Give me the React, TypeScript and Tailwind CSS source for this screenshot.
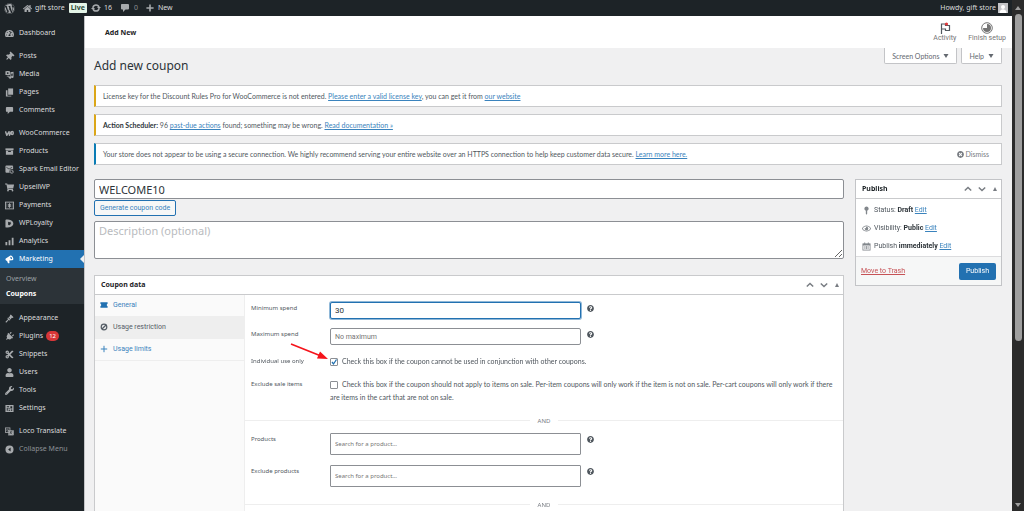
import React from "react";
import {
  FaWordpress,
  FaTachometerAlt,
  FaThumbtack,
  FaShoppingCart,
  FaUser,
  FaWrench,
  FaPlug,
  FaCut,
  FaHome,
  FaQuestionCircle,
  FaTimesCircle,
  FaRegEye,
} from "react-icons/fa";

type IconProps = { className?: string };
type IconType = (props: IconProps) => React.ReactNode;

const MediaIcon = ({ className }: IconProps) => (
  <svg viewBox="0 0 20 20" fill="currentColor" className={className}>
    <path d="M1 3h2l1-1h4l1 1h2v8H1z" />
    <circle cx="6" cy="6.800" r="2" fill="#1d2327" />
    <path d="M12 5l7-1v11.500a2.500 2.500 0 1 1-2-2.400V8l-3 .5V17a2.500 2.500 0 1 1-2-2.400z" />
    <path d="M4 12.500h6V18H8v-3.500H4z" />
  </svg>
);

const PagesIcon = ({ className }: IconProps) => (
  <svg viewBox="0 0 20 20" fill="currentColor" className={className}>
    <path d="M7 1h11v14H7z" />
    <path d="M2 5h3.500v12H14v2H2z" />
  </svg>
);

const CommentIcon = ({ className }: IconProps) => (
  <svg viewBox="0 0 20 20" fill="currentColor" className={className}>
    <path d="M4 2h12a2 2 0 0 1 2 2v7a2 2 0 0 1-2 2h-5l-5 5v-5H4a2 2 0 0 1-2-2V4c0-1.100.9-2 2-2z" />
  </svg>
);

const WooIcon = ({ className }: IconProps) => (
  <svg viewBox="0 0 20 20" fill="none" stroke="currentColor" strokeWidth="3.200" strokeLinejoin="round" className={className}>
    <path d="M1 5l3 9 5-8 1 8 4-8" />
    <ellipse cx="16" cy="9" rx="2.400" ry="3.400" />
  </svg>
);

const BoxIcon = ({ className }: IconProps) => (
  <svg viewBox="0 0 20 20" fill="currentColor" className={className}>
    <path d="M1 3h18v4H1z" />
    <path d="M2 8h16v9H2zM7 9v2h6V9z" fillRule="evenodd" />
  </svg>
);

const SparkIcon = ({ className }: IconProps) => (
  <svg viewBox="0 0 20 20" fill="currentColor" className={className}>
    <path d="M3 1h13a2 2 0 0 1 2 2v6.500a5.500 5.500 0 0 0-7.500 7.500H3a2 2 0 0 1-2-2V3c0-1.100.9-2 2-2z" />
    <path d="M3 5l6 4 7-4" fill="none" stroke="#1d2327" strokeWidth="1.500" />
    <circle cx="15" cy="15" r="3.600" fill="none" stroke="currentColor" strokeWidth="1.600" />
    <path d="M13 15l1.500 1.500 3-3" fill="none" stroke="currentColor" strokeWidth="1.400" />
  </svg>
);

const PaymentsIcon = ({ className }: IconProps) => (
  <svg viewBox="0 0 20 20" fill="none" stroke="currentColor" className={className}>
    <rect x="1" y="2.500" width="18" height="15" strokeWidth="2" />
    <path d="M13 7.500H8.500a1.200 1.200 0 0 0 0 2.500h3a1.200 1.200 0 0 1 0 2.500H7M10 5v10" strokeWidth="2.200" />
    <path d="M4 5v10M16 5v10" strokeWidth="1" />
  </svg>
);

const LoyaltyIcon = ({ className }: IconProps) => (
  <svg viewBox="0 0 20 20" fill="currentColor" className={className}>
    <path
      fillRule="evenodd"
      d="M1 3c0-1.500 1-2 2.500-2 8 0 15 3 15 9s-7 9-15 9C2 19 1 18.500 1 17zM7 6v8l2-1.500 2 2V12l3-1-2-2 1-3-3 1z"
    />
  </svg>
);

const AnalyticsIcon = ({ className }: IconProps) => (
  <svg viewBox="0 0 20 20" fill="currentColor" className={className}>
    <path d="M1 11h4v7.500H1zM8 7h4v11.500H8zM15 1.500h4v17h-4z" />
  </svg>
);

const MarketingIcon = ({ className }: IconProps) => (
  <svg viewBox="0 0 20 20" fill="currentColor" className={className}>
    <path
      fillRule="evenodd"
      d="M12 1c4 0 7 4.500 6.500 8.500-.3 2-2 2.800-3.500 2L9.500 12l.5 5c0 1.200-2.600 2-3.600 1L4.500 13C2 13 1 11 1 9.500S2 7 3.500 6.500zM12.500 4c-1.500 1-.5 4.500 2 5.500 2 0 1.500-5-2-5.500z"
    />
  </svg>
);

const BrushIcon = ({ className }: IconProps) => (
  <svg viewBox="0 0 20 20" fill="currentColor" className={className}>
    <path d="M11 3l2-2 6 6-2 2-2-.5-2.500 3.500-5-5L11 5zM6.500 8l5.500 5.500-2 1-2-1-4.500 5.300c-1 1-3-1-2-2L6.500 12l-1-2z" />
  </svg>
);

const SettingsIcon = ({ className }: IconProps) => (
  <svg viewBox="0 0 20 20" fill="currentColor" className={className}>
    <path
      fillRule="evenodd"
      d="M1 2h18v16H1zM4 5v2h5V5zM4 9v6h2V9zM8 9v2h2V9zM12 5v5h4V5zM8 13v2h3v-2zM13 12v3h3v-3z"
    />
  </svg>
);

const TranslateIcon = ({ className }: IconProps) => (
  <svg viewBox="0 0 20 20" fill="none" stroke="currentColor" className={className}>
    <rect x="1" y="2" width="10" height="10" strokeWidth="1.800" />
    <path d="M8 5H4v4h4V7H6.500" strokeWidth="1.200" />
    <rect x="8" y="8" width="11" height="10" fill="currentColor" strokeWidth="1" />
    <path d="M10.500 11h6M13.500 9.500V11l-3 5M12 12.500l4 3.500" stroke="#1d2327" strokeWidth="1.200" />
  </svg>
);

const CollapseIcon = ({ className }: IconProps) => (
  <svg viewBox="0 0 20 20" fill="currentColor" className={className}>
    <path fillRule="evenodd" d="M10 1a9 9 0 1 1 0 18 9 9 0 0 1 0-18zM12.500 5.500L7 10l5.500 4.500z" />
  </svg>
);

const UpdateIcon = ({ className }: IconProps) => (
  <svg viewBox="0 0 20 20" fill="none" stroke="currentColor" strokeWidth="3" className={className}>
    <path d="M4 8.500a6.200 6.200 0 0 1 12 0M16 11.500a6.200 6.200 0 0 1-12 0" />
    <path d="M12 8h8l-4 4.500zM0 12h8L4 7.500z" fill="currentColor" stroke="none" />
  </svg>
);

const PlusIcon = ({ className }: IconProps) => (
  <svg viewBox="0 0 20 20" fill="none" stroke="currentColor" strokeWidth="4" className={className}>
    <path d="M10 1v18M1 10h18" />
  </svg>
);

const ThinPlusIcon = ({ className }: IconProps) => (
  <svg viewBox="0 0 20 20" fill="none" stroke="currentColor" strokeWidth="2.500" className={className}>
    <path d="M10 2v16M2 10h16" />
  </svg>
);

const BlockedIcon = ({ className }: IconProps) => (
  <svg viewBox="0 0 20 20" fill="none" stroke="currentColor" strokeWidth="3" className={className}>
    <circle cx="10" cy="10" r="7" />
    <path d="M5 15L15 5" />
  </svg>
);

const TicketIcon = ({ className }: IconProps) => (
  <svg viewBox="0 0 20 20" fill="#2271b1" className={className}>
    <path d="M1 3h18v4a3.200 3.200 0 0 0 0 6v4H1v-4a3.200 3.200 0 0 0 0-6z" />
  </svg>
);

const PinIcon = ({ className }: IconProps) => (
  <svg viewBox="0 0 20 20" fill="currentColor" className={className}>
    <path d="M10 1a5 5 0 0 1 1.500 9.700V17L10 19.500 8.500 17v-6.300A5 5 0 0 1 10 1z" />
  </svg>
);

const CalendarIcon = ({ className }: IconProps) => (
  <svg viewBox="0 0 20 20" fill="none" stroke="currentColor" className={className}>
    <rect x="2" y="4" width="16" height="14" strokeWidth="1.800" />
    <path d="M2 6h16" strokeWidth="3.500" />
    <path d="M6 1v4M14 1v4" strokeWidth="2" />
    <path d="M6.500 9v7M10 9v7M13.500 9v7" strokeWidth="1.800" />
  </svg>
);

const ChevronIcon = ({ down }: { down?: boolean }) => (
  <svg viewBox="0 0 10 10" fill="none" stroke="#787c82" strokeWidth="1.800" className="size-2">
    <path d={down ? "M1 3l4 4 4-4" : "M1 7l4-4 4 4"} />
  </svg>
);

type MenuEntry = { label: string; icon: IconType; badge?: string; active?: boolean; muted?: boolean };

const menuGroups: MenuEntry[][] = [
  [{ label: "Dashboard", icon: FaTachometerAlt }],
  [
    { label: "Posts", icon: FaThumbtack },
    { label: "Media", icon: MediaIcon },
    { label: "Pages", icon: PagesIcon },
    { label: "Comments", icon: CommentIcon },
  ],
  [
    { label: "WooCommerce", icon: WooIcon },
    { label: "Products", icon: BoxIcon },
    { label: "Spark Email Editor", icon: SparkIcon },
    { label: "UpsellWP", icon: FaShoppingCart },
    { label: "Payments", icon: PaymentsIcon },
    { label: "WPLoyalty", icon: LoyaltyIcon },
    { label: "Analytics", icon: AnalyticsIcon },
    { label: "Marketing", icon: MarketingIcon, active: true },
  ],
  [
    { label: "Appearance", icon: BrushIcon },
    { label: "Plugins", icon: FaPlug, badge: "12" },
    { label: "Snippets", icon: FaCut },
    { label: "Users", icon: FaUser },
    { label: "Tools", icon: FaWrench },
    { label: "Settings", icon: SettingsIcon },
  ],
  [
    { label: "Loco Translate", icon: TranslateIcon },
    { label: "Collapse Menu", icon: CollapseIcon, muted: true },
  ],
];

// these two lean to the right
const tilted = ["Posts", "Plugins"];

const MenuItem = ({ label, icon: Icon, badge, active, muted }: MenuEntry) => (
  <li>
    <a
      href="#"
      className={`relative flex h-[18px] items-center gap-[5px] pl-[5px] ${
        active ? "bg-[#2271b1] text-white" : muted ? "text-[#8d9196]" : "text-[#dcdcde]"
      }`}
    >
      <Icon
        className={`size-[9px] shrink-0 ${active ? "text-white" : "text-[#a7aaad]"} ${
          tilted.includes(label) ? "rotate-45" : ""
        }`}
      />
      <span>{label}</span>
      {badge && (
        <span className="-ml-[2px] flex h-[10px] items-center rounded-full bg-[#d63638] px-[3px] text-[6px] text-white">
          {badge}
        </span>
      )}
      {active && (
        <svg viewBox="0 0 4 8" className="absolute right-0 h-2 w-1">
          <path d="M4 0v8L0 4z" fill="#f0f0f1" />
        </svg>
      )}
    </a>
    {active && (
      <ul className="flex h-9 flex-col bg-[#2c3338] px-[6px] py-[3px] leading-[15px]">
        <li>
          <a href="#" className="text-[#9ca1a6]">Overview</a>
        </li>
        <li>
          <a href="#" className="font-bold text-white">Coupons</a>
        </li>
      </ul>
    )}
  </li>
);

const Sidebar = () => (
  <nav className="w-[84px] shrink-0 bg-[#1d2327] pt-2">
    {menuGroups.map((group) => (
      <ul key={group[0].label} className="mb-[5px]">
        {group.map((entry) => (
          <MenuItem key={entry.label} {...entry} />
        ))}
      </ul>
    ))}
  </nav>
);

const AdminBar = () => (
  <header className="flex h-4 items-center justify-between bg-[#1d2327] pr-1 pl-1 text-[#dcdcde]">
    <div className="flex items-center">
      <FaWordpress className="mr-2 size-[11px] text-[#a7aaad]" />
      <FaHome className="mr-[3px] size-[9px] text-[#a7aaad]" />
      <span>gift store</span>
      <span className="mx-1 rounded-[1px] bg-[#e4f5e8] px-[2px] leading-[10px] font-bold text-[#2f4a39]">Live</span>
      <UpdateIcon className="mr-[3px] size-[10px] text-[#a7aaad]" />
      <span>16</span>
      <CommentIcon className="mr-1 ml-2 size-[10px] text-[#a7aaad]" />
      <span className="text-[#8d9196]">0</span>
      <PlusIcon className="mr-1 ml-2 size-2 text-[#a7aaad]" />
      <span>New</span>
    </div>
    <div className="flex items-center gap-[2px]">
      <span>Howdy, gift store</span>
      <svg viewBox="0 0 10 10" className="size-[10px]">
        <path d="M0 0h10v10H0z" fill="#c3c4c7" />
        <circle cx="5" cy="4" r="2" fill="#fff" />
        <path d="M1.500 10c0-5 7-5 7 0z" fill="#fff" />
      </svg>
    </div>
  </header>
);

const PageHeader = () => (
  <div className="flex h-8 items-center justify-between bg-white pr-[6px] pl-5">
    <span className="pt-[2px] font-['Noto_Sans',sans-serif] font-bold text-[#1d2327]">Add New</span>
    <div className="flex gap-3 text-[#757575]">
      <button type="button" className="flex flex-col items-center">
        <svg viewBox="0 0 12 12" className="size-3" fill="none" stroke="#50575e">
          <path d="M2.500 12V2h4v1.500h4v5h-4V7h-4" strokeWidth="1.200" />
          <circle cx="7.500" cy="2" r="1.600" fill="#e0383b" stroke="none" />
        </svg>
        <span className="leading-[9px]">Activity</span>
      </button>
      <button type="button" className="flex flex-col items-center">
        <svg viewBox="0 0 12 12" className="size-3">
          <circle cx="6" cy="6" r="5.300" fill="#fff" stroke="#757575" />
          <path d="M6 6V2a4 4 0 1 1-4 4z" fill="#757575" />
        </svg>
        <span className="leading-[9px]">Finish setup</span>
      </button>
    </div>
  </div>
);

const ScreenTab = ({ children }: { children: string }) => (
  <button
    type="button"
    className="flex h-4 items-center gap-1 rounded-b-[2px] border border-t-0 border-[#c3c4c7] bg-white px-[7px] font-[Lato,sans-serif] text-[#646970]"
  >
    {children}
    <svg viewBox="0 0 6 4" className="h-1 w-[6px]">
      <path d="M0.500 0h5L3 4z" fill="#646970" />
    </svg>
  </button>
);

const Notice = ({ info, children }: { info?: boolean; children: React.ReactNode }) => (
  <div
    className={`mb-[7px] flex h-[22px] items-center justify-between border border-l-2 border-[#c9cacc] bg-white pr-3 pl-[7px] font-[Lato,sans-serif] ${
      info ? "border-l-[#0a7cb5]" : "border-l-[#dba617]"
    }`}
  >
    {children}
  </div>
);

const Link = ({ children }: { children: React.ReactNode }) => (
  <a href="#" className="text-[#3a83bd] underline">
    {children}
  </a>
);

const PanelHeader = ({ title }: { title: string }) => (
  <div className="flex h-[19px] items-center justify-between border-b border-[#c9cacc] pr-1 pl-[6px]">
    <h2 className="font-['Noto_Sans',sans-serif] font-bold text-[#1d2327]">{title}</h2>
    <div className="flex items-center gap-[6px]">
      <button type="button" aria-label="Move up">
        <ChevronIcon />
      </button>
      <button type="button" aria-label="Move down">
        <ChevronIcon down />
      </button>
      <button type="button" aria-label="Toggle panel" className="pl-px">
        <svg viewBox="0 0 4 4" className="size-1">
          <path d="M0 4h4L2 0z" fill="#787c82" />
        </svg>
      </button>
    </div>
  </div>
);

const PublishRow = ({ icon: Icon, label, value }: { icon: IconType; label: string; value: string }) => (
  <div className="flex h-[18px] items-center gap-[3px]">
    <Icon className="size-[9px] text-[#82878c]" />
    <span>
      {label} <b className="text-[#2c3338]">{value}</b> <Link>Edit</Link>
    </span>
  </div>
);

const PublishBox = () => (
  <section className="border border-[#c3c4c7] bg-white">
    <PanelHeader title="Publish" />
    <div className="px-[6px] pt-[2px] pb-px">
      <PublishRow icon={PinIcon} label="Status:" value="Draft" />
      <PublishRow icon={FaRegEye} label="Visibility:" value="Public" />
      <PublishRow icon={CalendarIcon} label="Publish" value="immediately" />
    </div>
    <div className="flex h-[29px] items-center justify-between border-t border-[#dcdcde] bg-[#f6f7f7] px-[5px]">
      <a href="#" className="text-[#c65256] underline">Move to Trash</a>
      <button type="button" className="h-[17px] rounded-[2px] bg-[#2271b1] px-[7px] text-white">
        Publish
      </button>
    </div>
  </section>
);

const Help = () => <FaQuestionCircle className="mt-[3px] ml-[6px] size-[7px] shrink-0 text-[#50575e]" />;

const FieldRow = ({
  id,
  label,
  className,
  children,
}: {
  id: string;
  label: string;
  className: string;
  children: React.ReactNode;
}) => (
  <div className={`flex items-start px-[6px] ${className}`}>
    <label htmlFor={id} className="w-[79px] shrink-0 font-['Noto_Sans',sans-serif] text-[6px] leading-[13px]">
      {label}
    </label>
    {children}
  </div>
);

const ProductSearch = ({ id }: { id: string }) => (
  <input
    id={id}
    placeholder="Search for a product…"
    className="h-[22px] w-[251px] rounded-[1px] border border-[#8c8f94] bg-white px-1 font-['Noto_Sans',sans-serif] text-[6px] placeholder:text-[#757575]"
  />
);

const AndDivider = () => (
  <div className="flex h-[15px] items-center gap-2 font-['Noto_Sans',sans-serif] text-[6px] text-[#787c82]">
    <span className="h-px flex-1 bg-[#eeeeee]" />
    AND
    <span className="h-px flex-1 bg-[#eeeeee]" />
  </div>
);

const CouponTab = ({ icon: Icon, label, active }: { icon: IconType; label: string; active?: boolean }) => (
  <li className={`border-b border-[#eeeeee] ${active ? "bg-[#eeeeee]" : ""}`}>
    <a
      href="#"
      className={`flex h-[21px] items-center gap-[5px] pb-[2px] pl-[5px] ${
        active ? "text-[#555d66]" : "text-[#3a83bd]"
      }`}
    >
      <Icon className="size-2" />
      {label}
    </a>
  </li>
);

const CouponData = () => (
  <section className="mt-4 border border-[#c9cacc] bg-white">
    <PanelHeader title="Coupon data" />
    <div className="flex">
      <ul className="w-[150px] shrink-0 border-r border-[#eeeeee] bg-[#fafafa]">
        <CouponTab icon={TicketIcon} label="General" />
        <CouponTab icon={BlockedIcon} label="Usage restriction" active />
        <CouponTab icon={ThinPlusIcon} label="Usage limits" />
      </ul>
      <form className="min-w-0 flex-1 pt-[7px] pb-6">
        <FieldRow id="min" label="Minimum spend" className="h-[26px]">
          <input
            id="min"
            autoFocus
            defaultValue="30"
            className="h-[17px] w-[251px] rounded-[2px] border border-[#2271b1] bg-white px-1 text-[8px] text-[#2c3338] ring-1 ring-[#2271b1]/50 outline-none"
          />
          <Help />
        </FieldRow>
        <FieldRow id="max" label="Maximum spend" className="h-[27px]">
          <input
            id="max"
            placeholder="No maximum"
            className="h-[17px] w-[251px] rounded-[2px] border border-[#8c8f94] bg-white px-1 placeholder:text-[#757575]"
          />
          <Help />
        </FieldRow>
        <FieldRow id="individual" label="Individual use only" className="relative h-[23px]">
          <span className="flex items-center gap-1 font-[Lato,sans-serif] leading-[13px]">
            <input
              id="individual"
              type="checkbox"
              defaultChecked
              className="size-2 appearance-none rounded-[1px] border border-[#8c8f94] bg-white"
            />
            <svg viewBox="0 0 8 8" className="pointer-events-none absolute left-[85px] size-2" fill="none">
              <path d="M2 4l1.500 2L6.500 1.500" stroke="#2271b1" strokeWidth="1.300" />
            </svg>
            Check this box if the coupon cannot be used in conjunction with other coupons.
          </span>
          <svg viewBox="0 0 40 18" className="pointer-events-none absolute -top-3 left-[45px] h-[18px] w-10">
            <path d="M1 1l30 12" stroke="#f5141b" strokeWidth="1.600" />
            <path d="M38 16l-11-0.500 3-7z" fill="#f5141b" />
          </svg>
        </FieldRow>
        <FieldRow id="sale" label="Exclude sale items" className="h-[35px]">
          <span className="font-[Lato,sans-serif] leading-[13px]">
            <input
              id="sale"
              type="checkbox"
              className="mr-1 size-2 appearance-none rounded-[1px] border border-[#8c8f94] bg-white align-middle"
            />
            Check this box if the coupon should not apply to items on sale. Per-item coupons will only work if the item
            is not on sale. Per-cart coupons will only work if there are items in the cart that are not on sale.
          </span>
        </FieldRow>
        <AndDivider />
        <FieldRow id="products" label="Products" className="mt-[5px] h-8">
          <ProductSearch id="products" />
          <Help />
        </FieldRow>
        <FieldRow id="exclude" label="Exclude products" className="h-8">
          <ProductSearch id="exclude" />
          <Help />
        </FieldRow>
        <AndDivider />
      </form>
    </div>
  </section>
);

const ScrollBar = () => (
  <div className="flex w-3 shrink-0 flex-col items-center bg-[#2b2b2b] py-1">
    <svg viewBox="0 0 6 4" className="mt-[2px] h-1 w-[6px]">
      <path d="M0 4h6L3 0z" fill="#9f9f9f" />
    </svg>
    <div className="mt-1 h-[327px] w-[7px] rounded-full bg-[#9f9f9f]" />
    <svg viewBox="0 0 6 4" className="mt-auto h-1 w-[6px]">
      <path d="M0 0h6L3 4z" fill="#9f9f9f" />
    </svg>
  </div>
);

const App = () => {
  return (
    <div className="flex h-screen overflow-hidden bg-[#f0f0f1] font-['Noto_Sans',sans-serif] text-[7px] leading-[10px] text-[#50575e]">
      <div className="flex min-w-0 flex-1 flex-col">
        <AdminBar />
        <div className="flex min-h-0 flex-1">
          <Sidebar />
          <main className="min-w-0 flex-1 overflow-hidden border-l border-[#c3c4c7] font-[Roboto,sans-serif]">
            <PageHeader />
            <div className="pr-[10px] pl-[9px]">
              <div className="flex h-[37px] items-start justify-between">
                <h1 className="pt-[9px] font-['Noto_Sans',sans-serif] text-[12px] leading-[18px] text-[#2c3338]">
                  Add new coupon
                </h1>
                <div className="flex gap-1">
                  <ScreenTab>Screen Options</ScreenTab>
                  <ScreenTab>Help</ScreenTab>
                </div>
              </div>
              <Notice>
                <p>
                  License key for the Discount Rules Pro for WooCommerce is not entered.{" "}
                  <Link>Please enter a valid license key</Link>, you can get it from <Link>our website</Link>
                </p>
              </Notice>
              <Notice>
                <p>
                  <b className="text-[#2c3338]">Action Scheduler:</b> 96 <Link>past-due actions</Link> found; something
                  may be wrong. <Link>Read documentation »</Link>
                </p>
              </Notice>
              <Notice info>
                <p>
                  Your store does not appear to be using a secure connection. We highly recommend serving your entire
                  website over an HTTPS connection to help keep customer data secure. <Link>Learn more here.</Link>
                </p>
                <button type="button" className="flex items-center gap-[2px] text-[#787c82]">
                  <FaTimesCircle className="size-[7px]" />
                  Dismiss
                </button>
              </Notice>
              <div className="mt-[14px] flex items-start gap-[11px]">
                <div className="min-w-0 flex-1">
                  <input
                    aria-label="Coupon code"
                    defaultValue="WELCOME10"
                    className="block h-5 w-full rounded-[2px] border border-[#8c8f94] bg-white px-1 font-['Noto_Sans',sans-serif] text-[11px] text-[#2c3338]"
                  />
                  <button
                    type="button"
                    className="mt-px block h-4 rounded-[2px] border border-[#2271b1] bg-[#f6f7f7] px-[5px] text-[#3a83bd]"
                  >
                    Generate coupon code
                  </button>
                  <textarea
                    aria-label="Description"
                    placeholder="Description (optional)"
                    className="mt-[5px] block h-[38px] w-full rounded-[2px] border border-[#8c8f94] bg-white px-1 py-px font-['Noto_Sans',sans-serif] text-[11px] leading-4 placeholder:text-[#b9bbbe]"
                  />
                  <CouponData />
                </div>
                <aside className="w-[147px] shrink-0">
                  <PublishBox />
                </aside>
              </div>
            </div>
          </main>
        </div>
      </div>
      <ScrollBar />
    </div>
  );
};

export default App;
